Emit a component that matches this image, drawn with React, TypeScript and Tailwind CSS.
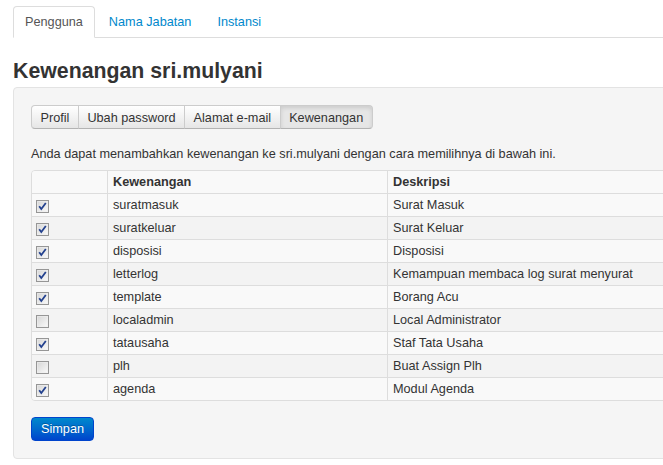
const rows = [
  { name: 'suratmasuk', desc: 'Surat Masuk', on: true },
  { name: 'suratkeluar', desc: 'Surat Keluar', on: true },
  { name: 'disposisi', desc: 'Disposisi', on: true },
  { name: 'letterlog', desc: 'Kemampuan membaca log surat menyurat', on: true },
  { name: 'template', desc: 'Borang Acu', on: true },
  { name: 'localadmin', desc: 'Local Administrator', on: false },
  { name: 'tatausaha', desc: 'Staf Tata Usaha', on: true },
  { name: 'plh', desc: 'Buat Assign Plh', on: false },
  { name: 'agenda', desc: 'Modul Agenda', on: true },
];

// old-school XP-ish checkbox
function Check({ on }: { on: boolean }) {
  return (
    <svg width="13" height="13" viewBox="0 0 13 13" className="block">
      <defs>
        <linearGradient id="cb" x1="0" y1="0" x2="1" y2="1">
          <stop offset="0" stopColor="#d4d4d4" />
          <stop offset="1" stopColor="#fcfcfc" />
        </linearGradient>
      </defs>
      <rect x="0.5" y="0.5" width="12" height="12" fill="url(#cb)" stroke="#969696" />
      <rect x="1.5" y="1.5" width="10" height="10" fill="none" stroke="#eeeeee" strokeOpacity="0.6" />
      {on && <path d="M3.2 6.2 L5.3 9 L9.8 3" fill="none" stroke="#24428f" strokeWidth="1.8" />}
    </svg>
  );
}

export default function App() {
  const tabs = ['Profil', 'Ubah password', 'Alamat e-mail', 'Kewenangan'];
  return (
    <div className="w-[663px] h-[465px] overflow-hidden bg-white font-['Liberation_Sans',Arial,sans-serif] text-[12.7px] leading-[18px] text-[#333]">
      <div className="w-[720px] pl-[13px]">
        <div className="flex pt-[6px] border-b border-[#ddd]">
          <div className="-mb-px h-[32px] px-[11px] pt-[6px] bg-white border border-[#ddd] border-b-white rounded-t-[4px] text-[#555]">
            Pengguna
          </div>
          <div className="ml-[2px] px-[12px] pt-[7px] h-[31px] text-[#0088cc]">Nama Jabatan</div>
          <div className="ml-[2px] px-[12px] pt-[7px] h-[31px] text-[#0088cc]">Instansi</div>
        </div>

        <h2 className="mt-[20px] text-[21.3px] leading-[26px] font-bold text-[#333]">Kewenangan sri.mulyani</h2>

        <div className="mt-[3px] bg-[#f5f5f5] border border-[#e3e3e3] rounded-[4px] p-[17px]">
          <div className="flex">
            {tabs.map((t, i) => (
              <div
                key={t}
                className={`h-[24px] px-[8.5px] pt-[3px] border border-[#ccc] border-b-[#b3b3b3] ${
                  i > 0 ? '-ml-px' : ''
                } ${i === 0 ? 'rounded-l-[4px]' : ''} ${i === tabs.length - 1 ? 'rounded-r-[4px]' : ''} ${
                  i === tabs.length - 1
                    ? 'bg-[#e6e6e6] shadow-[inset_0_2px_4px_rgba(0,0,0,0.12)]'
                    : 'bg-gradient-to-b from-white to-[#e6e6e6]'
                }`}
              >
                {t}
              </div>
            ))}
          </div>

          <p className="mt-[16px]">
            Anda dapat menambahkan kewenangan ke sri.mulyani dengan cara memilihnya di bawah ini.
          </p>

          <div className="mt-[7px] border border-[#ddd] rounded-[4px] overflow-hidden">
            <div className="flex h-[22px] bg-[#f9f9f9] font-bold">
              <div className="w-[75px]" />
              <div className="w-[280px] border-l border-[#ddd] pl-[5px] pt-[2px]">Kewenangan</div>
              <div className="flex-1 border-l border-[#ddd] pl-[5px] pt-[2px]">Deskripsi</div>
            </div>
            {rows.map((r, i) => (
              <div key={r.name} className={`flex h-[23px] border-t border-[#ddd] ${i % 2 === 0 ? 'bg-[#f9f9f9]' : 'bg-[#f3f3f3]'}`}>
                <div className="w-[75px] pl-[4px] pt-[6px]">
                  <Check on={r.on} />
                </div>
                <div className="w-[280px] border-l border-[#ddd] pl-[5px] pt-[2px]">{r.name}</div>
                <div className="flex-1 border-l border-[#ddd] pl-[5px] pt-[2px]">{r.desc}</div>
              </div>
            ))}
          </div>

          <button className="mt-[16px] h-[24px] px-[9px] rounded-[4px] border border-[#0044cc] bg-gradient-to-b from-[#0088cc] to-[#0044cc] text-white [text-shadow:0_-1px_0_rgba(0,0,0,0.25)]">
            Simpan
          </button>
        </div>
      </div>
    </div>
  );
}
